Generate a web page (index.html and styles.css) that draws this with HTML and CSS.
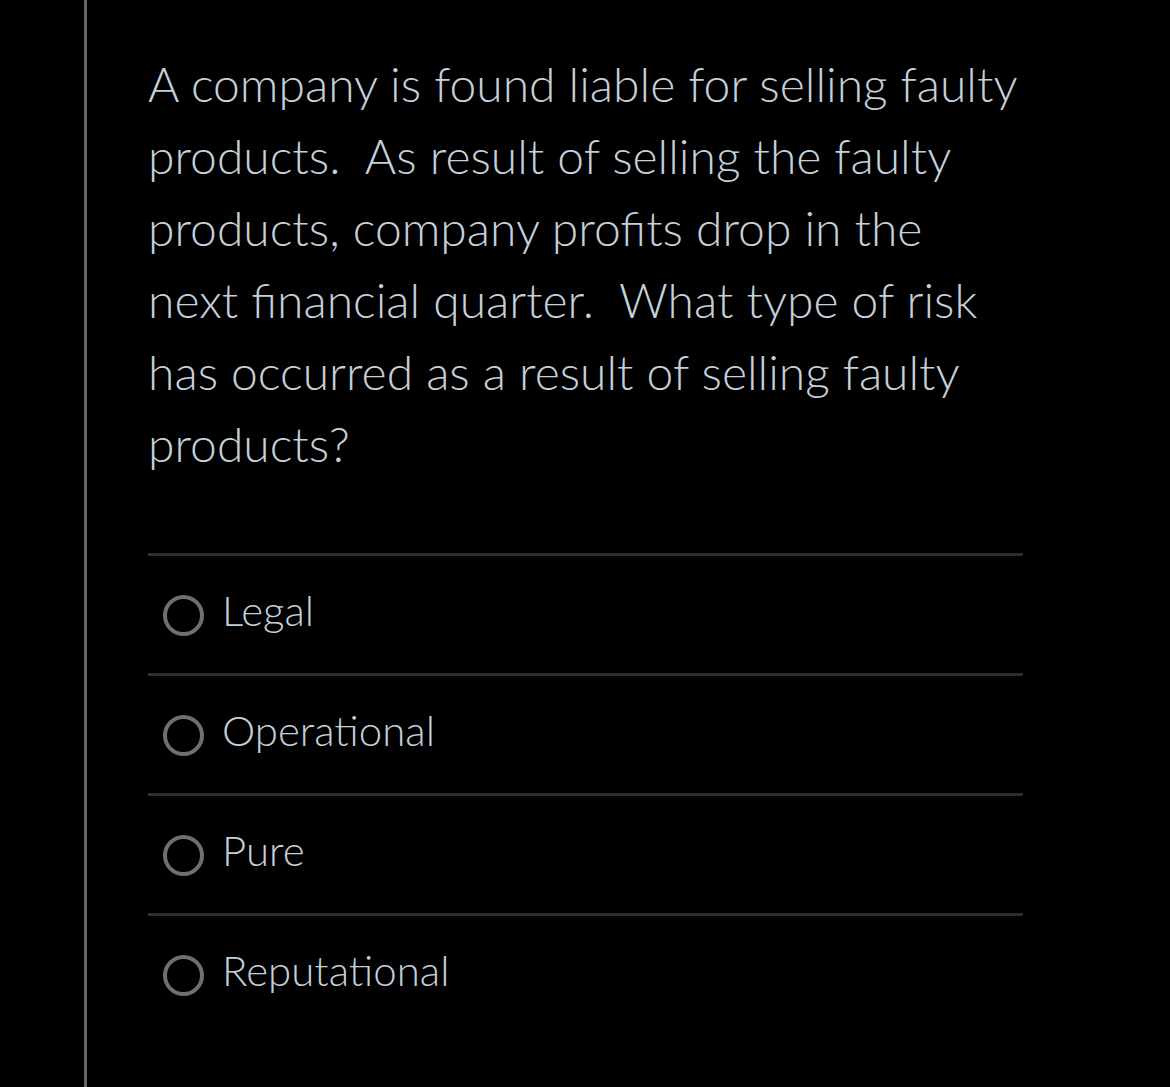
FILE: index.html
```html
<!DOCTYPE html>
<html>
<head>
<meta charset="utf-8">
<link rel="stylesheet" href="styles.css">
</head>
<body>
<div class="panel">
  <p class="question">A company is found liable for selling faulty products.&nbsp; As result of selling the faulty products, company profits drop in the next financial quarter.&nbsp; What type of risk has occurred as a result of selling faulty products?</p>
  <div class="options">
    <div class="option"><span class="radio"></span><span class="label">Legal</span></div>
    <div class="option"><span class="radio"></span><span class="label">Operational</span></div>
    <div class="option"><span class="radio"></span><span class="label">Pure</span></div>
    <div class="option"><span class="radio"></span><span class="label">Reputational</span></div>
  </div>
</div>
</body>
</html>
```
FILE: styles.css
```css
html, body {
  margin: 0;
  padding: 0;
  background: #000;
  height: 100%;
  overflow: hidden;
}
.panel {
  margin-left: 84px;
  width: 996px;
  height: 1087px;
  border-left: 3px solid #676767;
  border-right: 3px solid #676767;
  padding: 48px 61px 0 61px;
  box-sizing: content-box;
  font-family: "Lato Light", Lato, "Open Sans", sans-serif;
  font-weight: 300;
}
.question {
  margin: 0;
  width: 870px;
  font-size: 48px;
  line-height: 72px;
  color: #c4d0da;
}
.options {
  margin-top: 73px;
  width: 875px;
}
.option {
  display: flex;
  align-items: flex-start;
  border-top: 3px solid #2e2e2e;
  padding: 28px 0 37px 15px;
}
.radio {
  width: 41px;
  height: 41px;
  box-sizing: border-box;
  border: 4px solid #6f6f73;
  border-radius: 50%;
  margin-top: 11px;
  flex: none;
}
.label {
  margin-left: 18px;
  font-size: 42px;
  line-height: 52px;
  color: #c4d0da;
}
```
